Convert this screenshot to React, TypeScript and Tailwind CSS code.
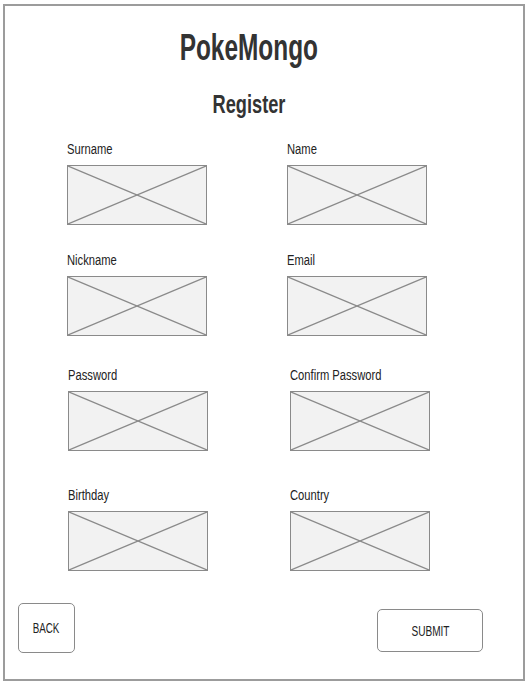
import React from 'react'

type Field = { label: string }

const Placeholder = () => {
  return (
    <div className="w-[140px] h-[60px] border border-[#8a8a8a] bg-[#f2f2f2]">
      <svg width="100%" height="100%" viewBox="0 0 140 60" preserveAspectRatio="none" className="block">
        <line x1="0" y1="0" x2="140" y2="60" stroke="#8a8a8a" strokeWidth="1.3" />
        <line x1="140" y1="0" x2="0" y2="60" stroke="#8a8a8a" strokeWidth="1.3" />
      </svg>
    </div>
  )
}

const FieldBox = ({ label }: Field) => {
  return (
    <div className="flex flex-col">
      <div className="h-[13px] text-[14px] leading-none text-[#222] whitespace-nowrap">
        <span className="inline-block origin-left scale-x-[0.8] -translate-y-[1px]">{label}</span>
      </div>
      <div className="mt-[9px]">
        <Placeholder />
      </div>
    </div>
  )
}

const App = () => {
  return (
    <div className="w-[528px] h-[684px] bg-white pt-[4px] pl-[3px]" style={{ fontFamily: '"Liberation Sans", Arial, sans-serif' }}>
      <div className="w-[522px] h-[677px] border-2 border-[#9c9c9c] flex flex-col">
        {/* header */}
        <div className="mt-[23px] pr-[30px] text-center text-[#333] font-bold">
          <div className="h-[37px] text-[37px] leading-none">
            <span className="inline-block scale-x-[0.66]">PokeMongo</span>
          </div>
          <div className="mt-[25px] h-[26px] text-[26px] leading-none">
            <span className="inline-block scale-x-[0.7]">Register</span>
          </div>
        </div>

        {/* form */}
        <div className="mt-[26px] flex flex-col">
          <div className="flex pl-[62px] gap-[80px]">
            <FieldBox label="Surname" />
            <FieldBox label="Name" />
          </div>
          <div className="mt-[29px] flex pl-[62px] gap-[80px]">
            <FieldBox label="Nickname" />
            <FieldBox label="Email" />
          </div>
          <div className="mt-[33px] flex pl-[63px] gap-[82px]">
            <FieldBox label="Password" />
            <FieldBox label="Confirm Password" />
          </div>
          <div className="mt-[38px] flex pl-[63px] gap-[82px]">
            <FieldBox label="Birthday" />
            <FieldBox label="Country" />
          </div>
        </div>

        {/* buttons */}
        <div className="mt-[32px] flex items-end justify-between pl-[13px] pr-[40px] text-[14px] text-[#222]">
          <button className="w-[57px] h-[50px] rounded-[5px] border border-[#8a8a8a] bg-white flex items-center justify-center">
            <span className="inline-block scale-x-[0.7] leading-none">BACK</span>
          </button>
          <button className="w-[106px] h-[43px] mb-[1px] rounded-[5px] border border-[#8a8a8a] bg-white flex items-center justify-center">
            <span className="inline-block scale-x-[0.72] leading-none">SUBMIT</span>
          </button>
        </div>
      </div>
    </div>
  )
}

export default App
